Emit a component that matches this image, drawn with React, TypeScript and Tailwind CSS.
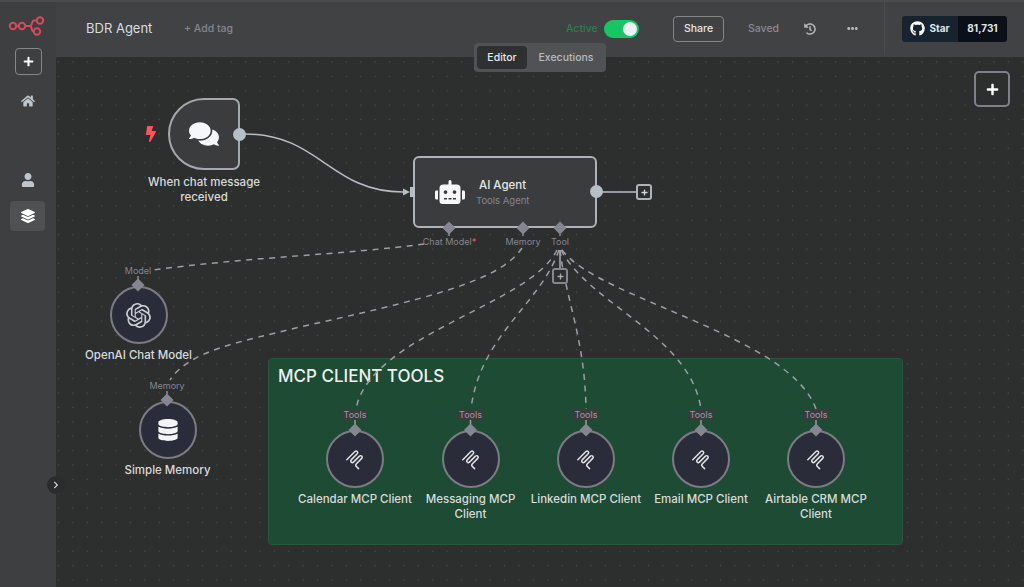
import { FaBolt, FaComments, FaDatabase, FaEllipsisH, FaGithub, FaHistory, FaHome, FaLayerGroup, FaPlus, FaRobot, FaUser, FaChevronRight } from 'react-icons/fa';
import { SiOpenai } from 'react-icons/si';

const CANVAS_LEFT = 56;
const CANVAS_TOP = 57;

const mcpNodes = [
  { x: 355, label: 'Calendar MCP Client' },
  { x: 470.5, label: 'Messaging MCP Client' },
  { x: 586, label: 'Linkedin MCP Client' },
  { x: 701, label: 'Email MCP Client' },
  { x: 816, label: 'Airtable CRM MCP Client' },
];

const dashedEdges = [
  'M424 244 C350 254 240 258 153 270',
  'M522 248 C500 282 420 300 300 327 C240 342 190 350 170 380',
  'M557 250 C530 305 370 335 356 409',
  'M559 250 C540 305 480 335 471 409',
  'M560 250 C566 300 585 340 586 409',
  'M561 250 C590 305 690 335 701 409',
  'M562 250 C600 300 790 335 816 409',
];

const diamonds = [
  [449, 228],
  [523, 228],
  [560, 228],
  [138, 285],
  [167, 400],
  ...mcpNodes.map((n) => [n.x, 430]),
];

function McpIcon() {
  return (
    <svg viewBox="-10 -11 20 22" className="h-[22px] w-5" fill="none" stroke="#e2e3e6" strokeWidth="1.5" strokeLinecap="round" strokeLinejoin="round">
      <path
        transform="translate(1 0) rotate(-45)"
        d="M-7 -6 H4.5 a1.6 1.6 0 0 1 0 3.2 H-4 a1.6 1.6 0 0 0 0 3.2 H4.5 a1.6 1.6 0 0 1 0 3.2 H-3 q-2 0 -2 2 v3"
      />
    </svg>
  );
}

function CircleNode({ x, y, label, children, width = 120 }: { x: number; y: number; label: string; children: React.ReactNode; width?: number }) {
  return (
    <div
      className="absolute flex flex-col items-center"
      style={{ left: x - CANVAS_LEFT - width / 2, top: y - CANVAS_TOP - 29, width }}
    >
      <div className="flex h-[58px] w-[58px] items-center justify-center rounded-full border-2 border-[#7b7c82] bg-[#2a2c39]">
        {children}
      </div>
      <p className="mt-[4px] text-center text-[11.5px] leading-[15px] font-medium text-[#d8dcdc]">{label}</p>
    </div>
  );
}

function PortLabel({ x, y, text, boxed = false, required = false }: { x: number; y: number; text: string; boxed?: boolean; required?: boolean }) {
  return (
    <span
      className={`absolute -translate-x-1/2 text-[9px] leading-[11px] whitespace-nowrap ${boxed ? 'bg-[#3a3b3d] px-px text-[#9a9ba3]' : 'text-[#85868f]'}`}
      style={{ left: x - CANVAS_LEFT, top: y - CANVAS_TOP - 5 }}
    >
      {text}
      {required && <span className="text-[#ff5a6e]">*</span>}
    </span>
  );
}

export default function App() {
  return (
    <div className="flex h-[587px] w-[1024px] overflow-hidden bg-[#2d2e2e] font-['Inter',sans-serif]">
      <aside className="flex w-14 shrink-0 flex-col items-center border-t-2 border-[#4a4b4d] bg-[#3e3f41]">
        <svg viewBox="0 0 56 40" className="mt-[3px] h-10 w-14 shrink-0" fill="none" stroke="#d9485f" strokeWidth="2">
          <circle cx="13" cy="21" r="3.2" />
          <circle cx="22" cy="21" r="3.2" />
          <circle cx="40" cy="15.500" r="3.2" />
          <circle cx="37" cy="26.500" r="3.2" />
          <path d="M16 21h3M25 21h5M30 21c2.500 0 1.500-5.500 4-5.500h3M30 21c2.500 0 .5 5.500 4 5.500" />
        </svg>
        <button className="mt-[3px] flex h-[27px] w-[27px] items-center justify-center rounded-[4px] border border-[#85878c] text-white">
          <FaPlus size={11} />
        </button>
        <div className="mt-[19px] text-[#bcc6cc]">
          <FaHome size={14} />
        </div>
        <div className="mt-[65px] text-[#bcc6cc]">
          <FaUser size={14} />
        </div>
        <div className="mt-[14px] ml-[-1px] flex h-[30px] w-[35px] items-center justify-center rounded-[4px] bg-[#505153] text-white">
          <FaLayerGroup size={14} />
        </div>
      </aside>

      <div className="flex min-w-0 flex-1 flex-col">
        <header className="flex h-[57px] shrink-0 items-center border-t-2 border-[#4a4b4d] bg-[#414244] pb-[2px] pl-[30px]">
          <h1 className="w-[98px] text-[13px] text-[#d5dee2]">BDR Agent</h1>
          <span className="w-[47px] text-[10.5px] font-medium whitespace-nowrap text-[#85868e]">+ Add tag</span>
          <span className="ml-[335px] w-[31px] text-[10.5px] font-medium text-[#2f7d55]">Active</span>
          <div className="ml-[7px] flex h-[18px] w-[35px] items-center justify-end rounded-full bg-[#14c763] pr-[2px]">
            <div className="h-[14px] w-[14px] rounded-full bg-[#eef0f4]" />
          </div>
          <button className="ml-[34px] h-[26px] w-[51px] rounded-[4px] border border-[#84868a] text-[10.5px] font-medium text-[#e6e6e8]">
            Share
          </button>
          <span className="ml-[24px] w-[31px] text-[10.5px] font-medium text-[#8a8b92]">Saved</span>
          <div className="ml-[25px] text-[#b4b6ba]">
            <FaHistory size={12} />
          </div>
          <div className="ml-[31px] text-[#b4b6ba]">
            <FaEllipsisH size={11} />
          </div>
          <div className="ml-[26px] flex h-full w-[140px] items-center justify-center border-l border-[#4a4b4d]">
            <div className="flex h-[26px] w-[105px] overflow-hidden rounded-[3px] text-[10px] font-bold text-[#dfe6ea]">
              <div className="flex w-[56px] items-center justify-center gap-[4px] bg-[#182330]">
                <FaGithub size={15} className="text-white" />
                Star
              </div>
              <div className="flex flex-1 items-center justify-center bg-[#0b0f18]">81,731</div>
            </div>
          </div>
        </header>

        <main className="relative flex-1 bg-[#2d2e2e] bg-[radial-gradient(circle,#4c4d4e_0.7px,transparent_1px)] bg-[size:14.4px_14.4px] bg-[position:-4.700px_-2.200px]">
          {/* green sticky behind the edges */}
          <div className="absolute top-[301px] left-[212px] h-[187px] w-[635px] rounded-[4px] border border-[#27573d] bg-[#1e4b33] px-[9px] py-[7px]">
            <h2 className="text-[17px] leading-[20px] font-medium text-[#eef0f0]">MCP CLIENT TOOLS</h2>
          </div>

          <svg viewBox="56 57 968 530" className="absolute inset-0 h-full w-full" fill="none">
            <path d="M245 134 C320 134 330 192 403 192" stroke="#b9bdc2" strokeWidth="1.500" />
            <path d="M403 188.500 L410 192 L403 195.500 Z" fill="#b9bdc2" />
            <path d="M602 192 H637" stroke="#b9bdc2" strokeWidth="1.500" />
            <path d="M560 250 V268" stroke="#8b8c96" strokeWidth="2" />
            <path d="M560 234 V236 M449 233 V236 M523 233 V236 M138 276 V280 M167 391 V395" stroke="#8b8c96" strokeWidth="1.500" />
            {mcpNodes.map((n) => (
              <path key={n.x} d={`M${n.x} 419 V425`} stroke="#9a9ba3" strokeWidth="1.500" />
            ))}
            {dashedEdges.map((d) => (
              <path key={d} d={d} stroke="#9d9ea6" strokeWidth="1.500" strokeDasharray="6 5.500" />
            ))}
          </svg>

          {/* trigger */}
          <div className="absolute top-[69px] left-[87px] text-[#ff5757]">
            <FaBolt size={16} />
          </div>
          <div className="absolute top-[41px] left-[112px] flex h-[72px] w-[72px] items-center justify-center rounded-l-[36px] rounded-r-[7px] border-2 border-[#a4a9ad] bg-[#3b3c3e] text-[#f6f7fb]">
            <FaComments size={30} />
          </div>
          <div className="absolute top-[71px] left-[177px] h-[13px] w-[13px] rounded-full bg-[#b5c0c6]" />
          <p className="absolute top-[118px] left-[84px] w-[128px] text-center text-[11.500px] leading-[14.500px] font-medium text-[#d8dcdc]">
            When chat message received
          </p>

          {/* agent */}
          <div className="absolute top-[99px] left-[357px] flex h-[72px] w-[184px] items-center rounded-[6px] border-2 border-[#aeb3b7] bg-[#3b3c3e] pl-[20px]">
            <FaRobot size={30} className="text-[#f8f8fa]" />
            <div className="ml-[11px]">
              <p className="pt-px pl-[3px] text-[11.500px] leading-[15px] font-medium text-[#e4e8e8]">AI Agent</p>
              <p className="text-[9.500px] leading-[15px] text-[#85868e]">Tools Agent</p>
            </div>
          </div>
          <div className="absolute top-[130px] left-[354px] h-[10px] w-[5px] bg-[#b5c0c6]" />
          <div className="absolute top-[128px] left-[534px] h-[13px] w-[13px] rounded-full bg-[#b5c0c6]" />
          <button className="absolute top-[127px] left-[580px] flex h-[16px] w-[16px] items-center justify-center rounded-[3px] border-2 border-[#aeb3b7] text-[#d4d8da]">
            <FaPlus size={7} />
          </button>
          <button className="absolute top-[211px] left-[496px] flex h-[16px] w-[16px] items-center justify-center rounded-[3px] border-2 border-[#85868f] bg-[#2d2e2e] text-[#a8a9b0]">
            <FaPlus size={7} />
          </button>

          <PortLabel x={449.500} y={241} text="Chat Model" required />
          <PortLabel x={523} y={241} text="Memory" />
          <PortLabel x={560} y={241} text="Tool" />
          <PortLabel x={138} y={270} text="Model" />
          <PortLabel x={167} y={385} text="Memory" />

          <CircleNode x={138.500} y={315} label="OpenAI Chat Model">
            <SiOpenai size={25} className="text-[#c9ccd2]" />
          </CircleNode>
          <CircleNode x={167.500} y={430} label="Simple Memory">
            <FaDatabase size={22} className="text-[#f4f4f6]" />
          </CircleNode>

          {mcpNodes.map((n) => (
            <div key={n.x}>
              <PortLabel x={n.x} y={414} text="Tools" boxed />
              <CircleNode x={n.x} y={459} label={n.label} width={115}>
                <McpIcon />
              </CircleNode>
            </div>
          ))}

          {/* diamonds sit on top of nodes */}
          <svg viewBox="56 57 968 530" className="pointer-events-none absolute inset-0 h-full w-full">
            {diamonds.map(([x, y]) => (
              <path key={`${x}-${y}`} d={`M${x} ${y - 6.5} L${x + 6.5} ${y} L${x} ${y + 6.5} L${x - 6.5} ${y} Z`} fill="#85868f" />
            ))}
          </svg>

          {/* editor / executions switch hangs over the header */}
          <div className="absolute top-[-14px] left-[418px] flex h-[29px] w-[132px] items-center gap-[2px] rounded-[4px] bg-[#515254] p-[3px] text-[10.5px] font-medium">
            <div className="flex h-[23px] w-[50px] items-center justify-center rounded-[4px] bg-[#2f3031] text-[#e4e8ea]">Editor</div>
            <div className="flex-1 text-center text-[#b6bcc0]">Executions</div>
          </div>

          <button className="absolute top-[14px] right-[14px] flex h-[36px] w-[36px] items-center justify-center rounded-[5px] border-2 border-[#7f8186] bg-[#2d2e2e] text-white">
            <FaPlus size={13} />
          </button>
          <div className="absolute top-[419px] left-[-9px] flex h-[18px] w-[18px] items-center justify-center rounded-full bg-[#2b2c2d] text-[#cfd3d6]">
            <FaChevronRight size={8} />
          </div>
        </main>
      </div>
    </div>
  );
}
